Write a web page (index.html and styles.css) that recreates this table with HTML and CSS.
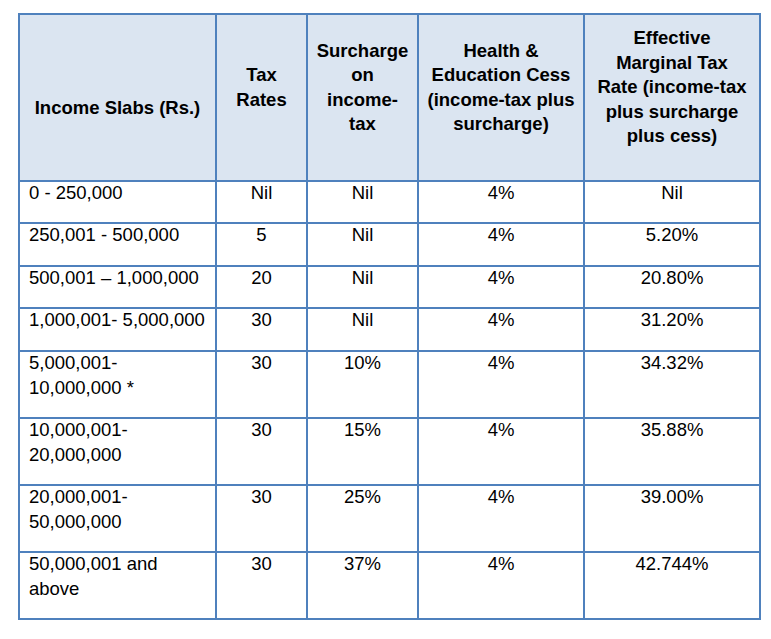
FILE: index.html
```html
<!DOCTYPE html>
<html>
<head>
<meta charset="utf-8">
<link rel="stylesheet" href="styles.css">
</head>
<body>
<div class="page">
  <div class="tax-table">
    <div class="cell head head-first">Income Slabs (Rs.)</div>
    <div class="cell head">Tax<br>Rates</div>
    <div class="cell head">Surcharge<br>on<br>income-<br>tax</div>
    <div class="cell head">Health &amp;<br>Education Cess<br>(income-tax plus<br>surcharge)</div>
    <div class="cell head">Effective<br>Marginal Tax<br>Rate (income-tax<br>plus surcharge<br>plus cess)</div>

    <div class="cell slab"><span>0 - 250,000</span></div>
    <div class="cell val"><span>Nil</span></div>
    <div class="cell val"><span>Nil</span></div>
    <div class="cell val"><span>4%</span></div>
    <div class="cell val"><span>Nil</span></div>

    <div class="cell slab"><span>250,001 - 500,000</span></div>
    <div class="cell val"><span>5</span></div>
    <div class="cell val"><span>Nil</span></div>
    <div class="cell val"><span>4%</span></div>
    <div class="cell val"><span>5.20%</span></div>

    <div class="cell slab"><span>500,001 – 1,000,000</span></div>
    <div class="cell val"><span>20</span></div>
    <div class="cell val"><span>Nil</span></div>
    <div class="cell val"><span>4%</span></div>
    <div class="cell val"><span>20.80%</span></div>

    <div class="cell slab"><span>1,000,001- 5,000,000</span></div>
    <div class="cell val"><span>30</span></div>
    <div class="cell val"><span>Nil</span></div>
    <div class="cell val"><span>4%</span></div>
    <div class="cell val"><span>31.20%</span></div>

    <div class="cell slab"><span>5,000,001-<br>10,000,000 *</span></div>
    <div class="cell val"><span>30</span></div>
    <div class="cell val"><span>10%</span></div>
    <div class="cell val"><span>4%</span></div>
    <div class="cell val"><span>34.32%</span></div>

    <div class="cell slab"><span>10,000,001-<br>20,000,000</span></div>
    <div class="cell val"><span>30</span></div>
    <div class="cell val"><span>15%</span></div>
    <div class="cell val"><span>4%</span></div>
    <div class="cell val"><span>35.88%</span></div>

    <div class="cell slab"><span>20,000,001-<br>50,000,000</span></div>
    <div class="cell val"><span>30</span></div>
    <div class="cell val"><span>25%</span></div>
    <div class="cell val"><span>4%</span></div>
    <div class="cell val"><span>39.00%</span></div>

    <div class="cell slab"><span>50,000,001 and<br>above</span></div>
    <div class="cell val"><span>30</span></div>
    <div class="cell val"><span>37%</span></div>
    <div class="cell val"><span>4%</span></div>
    <div class="cell val"><span>42.744%</span></div>
  </div>
</div>
</body>
</html>
```
FILE: styles.css
```css
html, body {
  margin: 0;
  padding: 0;
  background: #ffffff;
}

.page {
  padding: 13px 0 0 18px;
  font-family: "Liberation Sans", Arial, sans-serif;
  color: #000000;
}

.tax-table {
  display: grid;
  width: max-content;
  grid-template-columns: 195px 89px 109px 164px 174px;
  grid-template-rows: 165px 40px 41px 40px 41px 65px 65px 65px 65px;
  gap: 2px;
  padding: 2px;
  background: #4f81bd;
}

.cell {
  background: #ffffff;
  font-size: 18.5px;
  line-height: 25px;
}

.head {
  background: #dbe5f1;
  font-weight: bold;
  line-height: 24.5px;
  display: flex;
  align-items: center;
  justify-content: center;
  text-align: center;
  padding-bottom: 20px;
  box-sizing: border-box;
}

.head-first {
  padding-bottom: 0;
  padding-top: 22px;
}

.slab {
  padding-left: 9px;
}

.val {
  text-align: center;
}

.cell span {
  display: block;
  margin-top: -2px;
}
```
